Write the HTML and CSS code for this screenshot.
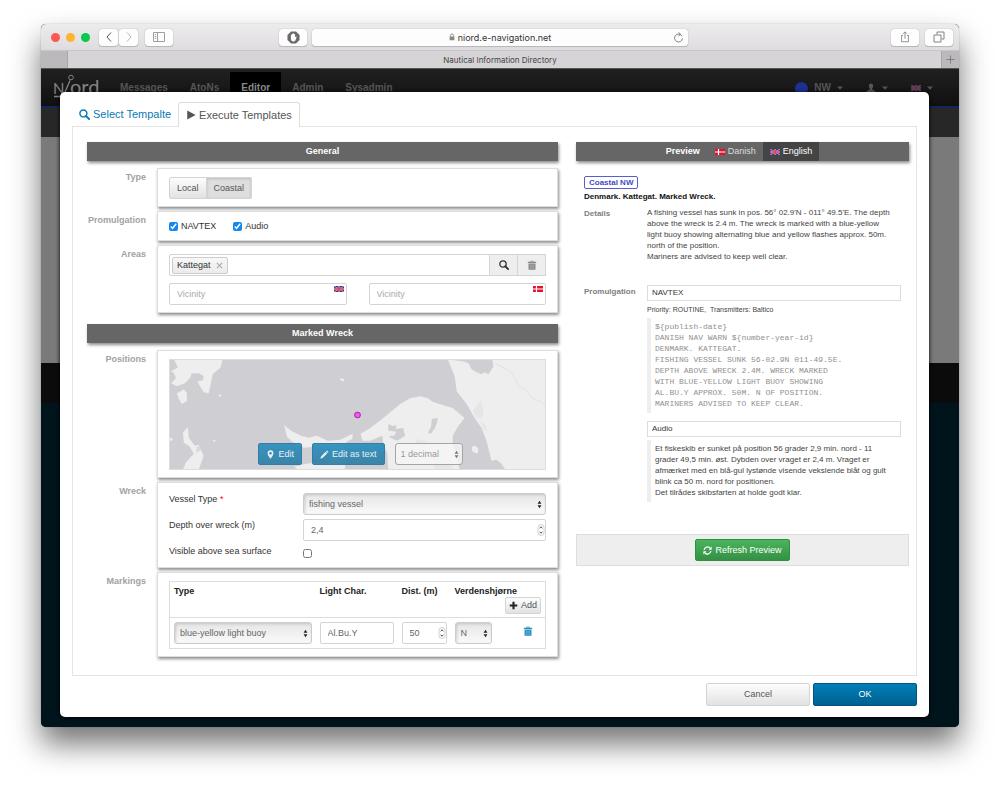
FILE: index.html
```
<!DOCTYPE html>
<html lang="en">
<head>
<meta charset="utf-8">
<title>Nautical Information Directory</title>
<link rel="stylesheet" href="styles.css">
</head>
<body>
<svg class="sprite" aria-hidden="true">
  <symbol id="search" viewBox="0 0 12 12"><circle cx="4.8" cy="4.8" r="3.8" fill="none" stroke="currentColor" stroke-width="1.6"/><path d="M7.5 7.5 11 11" stroke="currentColor" stroke-width="2.2" stroke-linecap="round"/></symbol>
  <symbol id="play" viewBox="0 0 12 12"><path d="M1.500 .5 11.500 6 1.500 11.500z" fill="currentColor"/></symbol>
  <symbol id="trash" viewBox="0 0 12 12"><path d="M1 2.200h3.200V.8h3.600v1.400H11v1.400H1zM1.800 4.200h8.400V11q0 .8-.8.8H2.600q-.8 0-.8-.8z" fill="currentColor"/><path d="M4 5.200v5.600M6 5.200v5.600M8 5.200v5.600" stroke="#fff" stroke-width=".5" opacity=".6"/><path d="M5 1.500h2" stroke="#fff" stroke-width=".6"/></symbol>
  <symbol id="plus" viewBox="0 0 12 12"><path d="M4.600 1h2.800v3.600H11v2.800H7.400V11H4.600V7.400H1V4.600h3.600z" fill="currentColor"/></symbol>
  <symbol id="pin" viewBox="0 0 12 12"><path fill-rule="evenodd" d="M6 .3a3.900 3.900 0 0 1 3.900 3.900C9.900 6.800 6 11.700 6 11.700S2.100 6.800 2.100 4.200A3.900 3.900 0 0 1 6 .3zM6 2.500a1.800 1.800 0 1 0 0 3.600 1.800 1.800 0 0 0 0-3.600z" fill="currentColor"/></symbol>
  <symbol id="pencil" viewBox="0 0 12 12"><path d="M9.300.6 11.400 2.700 10.200 3.900 8.100 1.800zM7.500 2.400 9.600 4.500 3.400 10.700.5 11.500 1.300 8.600z" fill="currentColor"/></symbol>
  <symbol id="refresh" viewBox="0 0 12 12"><path d="M1.500 5.300A4.600 4.600 0 0 1 9.600 3M10.500 6.700A4.600 4.600 0 0 1 2.400 9" fill="none" stroke="currentColor" stroke-width="1.600"/><path d="M11.500.8v4.100H7.400zM.5 11.200V7.100h4.100z" fill="currentColor"/></symbol>
  <symbol id="updown" viewBox="0 0 6 10"><path d="M3 .5 5.300 4H.7zM3 9.500.7 6h4.600z" fill="currentColor"/></symbol>
  <symbol id="spinner" viewBox="0 0 8 12"><rect x="1" y=".5" width="6" height="11" rx="3" fill="#fff" stroke="#bbb" stroke-width=".7"/><path d="M2.700 4.300 4 2.700l1.300 1.600M2.700 7.700 4 9.300l1.300-1.600" fill="none" stroke="#555"/></symbol>
  <symbol id="caret" viewBox="0 0 6 4"><path d="M0 .5h6L3 3.700z" fill="currentColor"/></symbol>
  <symbol id="uk" viewBox="0 0 20 12"><path d="M0 0h20v12H0z" fill="#1f3fa8"/><path d="M0 0 20 12M20 0 0 12" stroke="#c8cfe8" stroke-width="2"/><path d="M0 0 20 12M20 0 0 12" stroke="#d8304c" stroke-width="1"/><path d="M10 0v12M0 6h20" stroke="#f2dfe6" stroke-width="3.400"/><path d="M10 0v12M0 6h20" stroke="#e0142c" stroke-width="2.400"/></symbol>
  <symbol id="dk" viewBox="0 0 20 12"><path d="M0 0h20v12H0z" fill="#e4112d"/><path d="M7 0v12M0 6h20" stroke="#fff" stroke-width="2.400"/></symbol>
</svg>

<div class="window">
  <header class="toolbar">
    <div class="lights"><i class="light red"></i><i class="light amber"></i><i class="light green"></i></div>
    <div class="history">
      <button class="tool" aria-label="Back"><svg viewBox="0 0 10 12"><path d="M7 1.500 3 6l4 4.500" fill="none" stroke="#555"/></svg></button>
      <button class="tool" aria-label="Forward"><svg viewBox="0 0 10 12"><path d="M3 1.500 7 6l-4 4.500" fill="none" stroke="#bbb"/></svg></button>
    </div>
    <button class="tool sidebar-btn" aria-label="Sidebar"><svg viewBox="0 0 12 12"><path d="M.5 1.500h11v9H.5zM4.500 1.500v9M1.800 3.700h1.400M1.800 5.500h1.400M1.800 7.300h1.400" fill="none" stroke="#888" stroke-width=".8"/></svg></button>
    <div class="address-area">
      <button class="tool" aria-label="Content blocker"><svg class="stop" viewBox="0 0 14 14"><path d="M4.300.5h5.400l3.800 3.800v5.400l-3.800 3.800H4.300L.5 9.700V4.300z" fill="#6a6a6a"/><path d="M4.200 7V4.200q.5-.7 1 0V3.300q.6-.8 1.100 0V2.900q.7-.8 1.200 0v.6q.7-.7 1.200 0V7l.8-1q.8-.3.9.4L9 10.200q-.6 1-2 1-2.800 0-2.800-2.600z" fill="#fff"/></svg></button>
      <div class="address">
        <span class="url"><svg class="lock" viewBox="0 0 8 10"><path d="M2 4.500V3a2 2 0 0 1 4 0v1.500" fill="none" stroke="#888" stroke-width="1.200"/><path d="M.8 4.300h6.400v5H.8z" fill="#888"/></svg>niord.e-navigation.net</span>
        <button class="reload" aria-label="Reload"><svg viewBox="0 0 12 12"><path d="M9.800 4.500A4.300 4.300 0 1 0 10.300 7M6 .4 8.300 2.400 6 4.200" fill="none" stroke="#777"/></svg></button>
      </div>
    </div>
    <button class="tool" aria-label="Share"><svg viewBox="0 0 12 14"><path d="M3.800 5H2v7.500h8V5H8.200M6 9V1.200M3.800 3.200 6 1l2.200 2.200" fill="none" stroke="#777" stroke-width=".9"/></svg></button>
    <button class="tool" aria-label="Tabs"><svg viewBox="0 0 12 12"><path d="M4 3.500V1h7v7H8.500M1 4h7v7H1z" fill="none" stroke="#777" stroke-width=".9"/></svg></button>
  </header>
  <div class="tabbar">
    <span class="tab-edge"></span>
    <span class="tab-title">Nautical Information Directory</span>
    <button class="new-tab" aria-label="New tab"><svg viewBox="0 0 10 10"><path d="M5 .5v9M.5 5h9" stroke="#777"/></svg></button>
  </div>

  <div class="stage">
    <div class="site">
      <nav class="site-nav">
        <svg class="logo" viewBox="0 0 48 30" role="img" aria-label="Niord"><text x="0" y="22" class="logo-small">N</text><text x="17" y="22" class="logo-big">ord</text><path d="M10.500 23.500 17 8.500M1 24.500h16" fill="none" stroke="#858585" stroke-width="1.300"/><circle cx="18" cy="5.500" r="2.300" fill="none" stroke="#858585"/></svg>
        <a href="#">Messages</a><a href="#">AtoNs</a><a href="#" class="current">Editor</a><a href="#">Admin</a><a href="#">Sysadmin</a>
        <div class="nav-right">
          <a href="#"><i class="dot"></i>NW<svg class="caret"><use href="#caret"/></svg></a>
          <a href="#" aria-label="User"><svg class="user" viewBox="0 0 12 12"><path d="M6 .5c2 0 2.700 1.400 2.600 3.200C8.500 5 8 6 7.400 6.600v1.200L11 9.500q.8.400.8 2.500H.2q0-2.100.8-2.500l3.600-1.700V6.600C4 6 3.500 5 3.400 3.700 3.300 1.900 4 .5 6 .5z" fill="currentColor"/></svg><svg class="caret"><use href="#caret"/></svg></a>
          <a href="#" aria-label="Language"><svg class="flag dim"><use href="#uk"/></svg><svg class="caret"><use href="#caret"/></svg></a>
        </div>
      </nav>
      <div class="site-sub"></div>
      <div class="site-main"></div>
      <div class="site-foot"></div>
      <div class="site-end"></div>
    </div>

    <section class="modal" role="dialog" aria-label="Execute Templates">
      <div class="tabs">
        <a href="#" class="tab"><svg class="icon"><use href="#search"/></svg>Select Tempalte</a>
        <a href="#" class="tab active"><svg class="icon"><use href="#play"/></svg>Execute Templates</a>
      </div>
      <div class="panel">
        <form class="editor">
          <h2 class="bar">General</h2>
          <div class="group">
            <span class="group-label">Type</span>
            <div class="box"><div class="btn-group"><button type="button" class="btn">Local</button><button type="button" class="btn pressed">Coastal</button></div></div>
          </div>
          <div class="group">
            <span class="group-label">Promulgation</span>
            <div class="box checks">
              <label class="check"><input type="checkbox" checked>NAVTEX</label>
              <label class="check"><input type="checkbox" checked>Audio</label>
            </div>
          </div>
          <div class="group">
            <label class="group-label" for="area">Areas</label>
            <div class="box areas">
              <div class="area-row">
                <div class="tag-field"><span class="tag">Kattegat<button type="button" class="tag-x" aria-label="Remove Kattegat"><svg viewBox="0 0 8 8"><path d="M1 1l6 6M7 1 1 7" stroke="#aaa" stroke-width="1.300"/></svg></button></span><input id="area" type="text"></div>
                <button type="button" class="addon dark" aria-label="Search area"><svg class="icon"><use href="#search"/></svg></button>
                <button type="button" class="addon" aria-label="Clear areas"><svg class="icon"><use href="#trash"/></svg></button>
              </div>
              <div class="vicinities">
                <div class="field-wrap"><input class="field" type="text" placeholder="Vicinity" aria-label="Vicinity, English"><svg class="flag corner"><use href="#uk"/></svg></div>
                <div class="field-wrap"><input class="field" type="text" placeholder="Vicinity" aria-label="Vicinity, Danish"><svg class="flag corner"><use href="#dk"/></svg></div>
              </div>
            </div>
          </div>

          <h2 class="bar second">Marked Wreck</h2>
          <div class="group">
            <span class="group-label">Positions</span>
            <div class="box">
              <div class="map">
                <svg class="chart" viewBox="0 0 378 111" preserveAspectRatio="xMidYMid slice" role="img" aria-label="Map of Kattegat">
                  <path fill="#cfced3" d="M0 0h378v111H0z"/>
                  <g fill="#eee">
                    <path d="M4 0h49l-2 8-8 7-2 10-2 9-5-1-5-8-1-3 5-1 1-4-5-3-7 0-2 5-5 5-8 3-6-3 5-5-2-5-3-2 7-4z"/>
                    <path d="M7 34l7-4 3 4 0 8-5 3-3-5z"/>
                    <path d="M18 68l1 11 6 8 4-1 5 11-5 14H13l3-7 8-9-4-7-6-4-1-10z"/>
                    <path d="M0 79l3 1-1 2H0zM43 81l4 1-3 1zM49 35l3 1-2 2zM171 19l5 1-1 2-3-1z"/>
                    <path d="M115 66l7 6 10 5 8 2 8-2 11 5 13-1 12-6 0 5-6 3-5 9 5 6-2 13h-47l-4-3 14-3 20-2 4-10-6-6-22 2-12-6-5-5z"/>
                    <path d="M88 89l6 3 4 5-7-3zM127 108l6 3h-5z"/>
                    <path d="M192 75l10-6 13-10 17-14 10-6 10-2 8 2 5 4 10 3 10 3 12 10-7 9-5 9v10l4 8 3 16h-72l-1-16-4-10-1-8-12 5-8 0z"/>
                    <path d="M280 0l7 17 2 15 10 13 8 14 7 10 5 13 5 20 5-1 5 4 4 6h40V0h-53l1 7-5 8-4-2-3 2-5-2-5-3-3-6-5-2z"/>
                    <path d="M304 88l4-1 3 3-1 5-5-2z"/>
                  </g>
                  <g fill="#cfced3">
                    <path d="M220 65l5 2 3-1 0 4 7-1 2 8-8 5-7-3-1-2 5 0 2-4-8-1z"/>
                    <path d="M264 60l6-1-1 5-2 5-4 6-3-1 3-6z"/>
                    <path d="M27 88l4-1 0 5-5 2z" opacity=".6"/>
                  </g>
                  <g fill="#e3e3e3"><path d="M311 45l2-4 3 10-1 8-6 0-4-7zM313 62l6 5 1 5-5-2zM247 80l12 3-2 5-9-2zM266 105l18 0 2 6h-20z" opacity=".7"/></g>
                  <path d="M328 4l8 4 9 6 6 12 9 6 6 8 7 2 5 4" fill="none" stroke="#dedede" stroke-width=".8"/>
                  <circle cx="189" cy="56" r="2.900" fill="#f457ec" stroke="#b01ca8"/>
                </svg>
                <div class="map-tools">
                  <button type="button" class="btn blue"><svg class="icon"><use href="#pin"/></svg>Edit</button>
                  <button type="button" class="btn blue"><svg class="icon"><use href="#pencil"/></svg>Edit as text</button>
                  <span class="select glass"><select aria-label="Position format"><option>1 decimal</option></select><svg class="arrows"><use href="#updown"/></svg></span>
                </div>
              </div>
            </div>
          </div>
          <div class="group">
            <span class="group-label">Wreck</span>
            <div class="box wreck">
              <label for="vessel">Vessel Type <span class="req">*</span></label>
              <span class="select"><select id="vessel"><option>fishing vessel</option></select><svg class="arrows"><use href="#updown"/></svg></span>
              <label for="depth">Depth over wreck (m)</label>
              <div class="field-wrap"><input class="field" id="depth" type="text" inputmode="decimal" value="2,4"><svg class="spin"><use href="#spinner"/></svg></div>
              <label for="visible">Visible above sea surface</label>
              <input id="visible" type="checkbox">
            </div>
          </div>
          <div class="group">
            <span class="group-label">Markings</span>
            <div class="box">
              <table class="markings">
                <colgroup><col class="c-type"><col class="c-light"><col class="c-dist"><col class="c-dir"><col></colgroup>
                <thead><tr><th>Type</th><th>Light Char.</th><th>Dist. (m)</th><th>Verdenshjørne</th><th class="add-cell"><button type="button" class="btn small"><svg class="icon"><use href="#plus"/></svg>Add</button></th></tr></thead>
                <tbody><tr>
                  <td><span class="select"><select aria-label="Type"><option>blue-yellow light buoy</option></select><svg class="arrows"><use href="#updown"/></svg></span></td>
                  <td><input class="field tight" type="text" value="Al.Bu.Y" aria-label="Light character"></td>
                  <td><div class="field-wrap"><input class="field tight" type="text" inputmode="numeric" value="50" aria-label="Distance"><svg class="spin"><use href="#spinner"/></svg></div></td>
                  <td><span class="select"><select aria-label="Direction"><option>N</option></select><svg class="arrows"><use href="#updown"/></svg></span></td>
                  <td class="del-cell"><button type="button" class="delete" aria-label="Delete marking"><svg class="icon"><use href="#trash"/></svg></button></td>
                </tr></tbody>
              </table>
            </div>
          </div>
        </form>

        <div class="preview">
          <div class="bar preview-bar">
            <h2>Preview</h2>
            <a href="#" class="lang"><svg class="flag"><use href="#dk"/></svg>Danish</a>
            <a href="#" class="lang on"><svg class="flag"><use href="#uk"/></svg>English</a>
          </div>
          <article class="message">
            <span class="badge">Coastal NW</span>
            <h3>Denmark. Kattegat. Marked Wreck.</h3>
            <dl>
              <dt>Details</dt>
              <dd>A fishing vessel has sunk in pos. 56° 02.9'N - 011° 49.5'E. The depth<br>above the wreck is 2.4 m. The wreck is marked with a blue-yellow<br>light buoy showing alternating blue and yellow flashes approx. 50m.<br>north of the position.<br>Mariners are advised to keep well clear.</dd>
              <dt class="promo">Promulgation</dt>
              <dd>
                <div class="channel">NAVTEX</div>
                <p class="meta">Priority: ROUTINE,&nbsp; Transmitters: Baltico</p>
                <pre class="quote">${publish-date}
DANISH NAV WARN ${number-year-id}
DENMARK. KATTEGAT.
FISHING VESSEL SUNK 56-02.9N 011-49.5E.
DEPTH ABOVE WRECK 2.4M. WRECK MARKED
WITH BLUE-YELLOW LIGHT BUOY SHOWING
AL.BU.Y APPROX. 50M. N OF POSITION.
MARINERS ADVISED TO KEEP CLEAR.</pre>
                <div class="channel">Audio</div>
                <div class="quote spoken">Et fiskeskib er sunket på position 56 grader 2,9 min. nord - 11<br>grader 49,5 min. øst. Dybden over vraget er 2,4 m. Vraget er<br>afmærket med en blå-gul lystønde visende vekslende blåt og gult<br>blink ca 50 m. nord for positionen.<br>Det tilrådes skibsfarten at holde godt klar.</div>
              </dd>
            </dl>
          </article>
          <div class="refresh-box"><button type="button" class="btn green"><svg class="icon"><use href="#refresh"/></svg>Refresh Preview</button></div>
        </div>
      </div>
      <footer class="actions"><button type="button" class="btn">Cancel</button><button type="button" class="btn primary">OK</button></footer>
    </section>
  </div>
</div>
</body>
</html>
```
FILE: styles.css
```
* { box-sizing: border-box; }
body { margin: 0; padding: 24px 41px 50px; background: #fff; color: #333; font: 9px/13px "Liberation Sans", Arial, sans-serif; }
a { color: inherit; text-decoration: none; }
button, input, select { font: inherit; color: inherit; margin: 0; }
button { cursor: pointer; }
h2, h3, p, dl, dd, pre { margin: 0; }
.sprite { position: absolute; width: 0; height: 0; }
.icon { width: 9px; height: 9px; flex: none; }
.flag { width: 10px; height: 6px; flex: none; }

/* browser window */
.window { border-radius: 5px; box-shadow: 0 0 1px rgba(0,0,0,.5), 0 17px 30px rgba(0,0,0,.55); background: #00141c; }
.toolbar { height: 27px; display: flex; align-items: center; padding: 0 6px 0 10px; background: linear-gradient(#edebed, #dedcde); border-radius: 5px 5px 0 0; border-bottom: 1px solid #c8c6c8; }
.lights { display: flex; gap: 6px; }
.light { width: 9px; height: 9px; border-radius: 50%; }
.red { background: #fc5753; }
.amber { background: #fdb431; }
.light.green { background: #06c94b; }
.tool { width: 28px; height: 17px; padding: 0; display: grid; place-items: center; border: 0; border-radius: 3px; background: #fdfdfd; box-shadow: 0 0 1px rgba(0,0,0,.4), 0 1px 1px rgba(0,0,0,.15); }
.tool svg { width: 12px; height: 12px; }
.tool .stop { width: 13px; height: 13px; }
.tool + .tool { margin-left: 6px; }
.history { display: flex; margin-left: 9px; gap: 1px; }
.history .tool { width: 19px; margin: 0; }
.sidebar-btn { margin-left: 7px; }
.address-area { flex: 1; display: flex; justify-content: center; gap: 5px; margin: 0 203px 0 106px; }
.address { flex: 1; display: flex; align-items: center; justify-content: center; position: relative; background: #fdfdfd; border-radius: 3px; box-shadow: 0 0 1px rgba(0,0,0,.4), 0 1px 1px rgba(0,0,0,.15); font-family: Inter, sans-serif; color: #333; }
.url { display: flex; align-items: center; gap: 3px; }
.lock { width: 6px; height: 8px; }
.reload { position: absolute; right: 4px; top: 3px; width: 11px; height: 11px; padding: 0; border: 0; background: none; display: grid; }
.tabbar { height: 18px; display: flex; align-items: stretch; background: #d6d4d6; border-bottom: 1px solid #555; font: 8px/18px Inter, sans-serif; color: #444; }
.tab-edge { width: 27px; background: #bbb9bb; border-right: 1px solid #a8a6a8; }
.tab-title { flex: 1; text-align: center; padding-right: 9px; }
.new-tab { width: 18px; padding: 0; border: 0; border-left: 1px solid #a8a6a8; background: #bbb9bb; display: grid; place-items: center; }
.new-tab svg { width: 9px; height: 9px; }

/* site behind the dialog */
.stage { display: grid; border-radius: 0 0 5px 5px; overflow: hidden; }
.site, .modal { grid-area: 1 / 1; }
.site { display: flex; flex-direction: column; }
.site-nav { height: 39px; display: flex; align-items: flex-start; padding: 3px 16px 0 12px; background: linear-gradient(#202020, #101010); border-bottom: 2px solid #14245f; color: #555; font-size: 10px; font-weight: bold; line-height: 32px; }
.logo { width: 48px; height: 30px; margin-right: 8px; }
.logo text { fill: #858585; font-family: Lato, sans-serif; font-weight: normal; }
.logo .logo-small { font-size: 15px; }
.logo .logo-big { font-size: 20px; }
.site-nav > a { padding: 0 11px; }
.site-nav > .current { background: #000; color: #8a8a8a; }
.nav-right { margin-left: auto; padding-right: 10px; display: flex; gap: 23px; }
.nav-right a { display: flex; align-items: center; gap: 6px; }
.dot { width: 13px; height: 13px; border-radius: 50%; background: #1c3190; }
.caret { width: 6px; height: 4px; }
.user { width: 10px; height: 10px; }
.dim { opacity: .45; }
.site-sub { height: 29px; background: #272727; }
.site-main { height: 226px; background: #7a7a7a; }
.site-foot { height: 40px; background: #0b0b0b; }
.site-end { flex: 1; background: #00141c; }

/* dialog */
.modal { margin: 23px 30px 10px 19px; padding: 10px 12px 11px; background: #fff; border-radius: 5px; box-shadow: 0 1px 4px #000; }
.tabs { display: flex; font-size: 11px; line-height: 23px; }
.tab { display: flex; align-items: center; gap: 3px; padding: 0 7px; height: 24px; color: #0a7ab5; }
.tab .icon { width: 11px; height: 11px; }
.tab.active { padding: 0 7px; margin-bottom: -1px; height: 25px; color: #555; border: 1px solid #ddd; border-bottom: 0; border-radius: 3px 3px 0 0; background: #fff; position: relative; }
.active .icon { width: 10px; height: 10px; }
.panel { display: grid; grid-template-columns: minmax(0, 471fr) minmax(0, 333fr); gap: 18px; padding: 15px 7px 18px 14px; border: 1px solid #e4e4e4; }
.bar { height: 19px; line-height: 19px; margin: 0; text-align: center; background: #666; color: #fff; font-size: 9px; box-shadow: 1px 2px 3px rgba(0,0,0,.45); }
.second { margin-top: 11px; margin-bottom: 7px; }
.bar + .group { margin-top: 7px; }
.group { display: grid; grid-template-columns: 59px minmax(0, 1fr); gap: 11px; margin-top: 4px; }
.group-label { padding-top: 3px; text-align: right; font-weight: bold; color: #a2a2a2; }
.box { padding: 8px 11px 7px; background: #fff; border: 1px solid #ddd; box-shadow: 1px 2px 3px rgba(0,0,0,.45); }

.btn { height: 22px; padding: 0 7px; display: inline-flex; align-items: center; justify-content: center; gap: 3px; border: 1px solid #d4d4d4; border-radius: 2px; background: linear-gradient(#fdfdfd, #e2e2e2); color: #555; white-space: nowrap; }
.btn-group { display: flex; }
.btn-group .btn:first-child { border-radius: 2px 0 0 2px; }
.btn-group .btn + .btn { border-left: 0; border-radius: 0 2px 2px 0; }
.btn.pressed { background: #dedede; box-shadow: inset 0 1px 3px rgba(0,0,0,.15); }
.btn.small { height: 17px; padding: 0 3px; }
.small .icon { color: #222; }
.btn.blue { background: linear-gradient(#2b8fbe, #317fa5); border-color: #2478a0; color: #e8f3f8; opacity: .93; }
.btn.green { background: linear-gradient(#4bb45c, #349045); border-color: #2e9140; color: #fff; }
.btn.primary { background: linear-gradient(#0080b8, #00608f); border-color: #005580; color: #fff; }

.checks { display: flex; gap: 17px; }
.check { display: flex; align-items: center; gap: 3px; line-height: 13px; }
input[type=checkbox] { width: 9px; height: 9px; margin: 0; accent-color: #1189f0; }

.field { width: 100%; height: 22px; padding: 0 7px; display: block; border: 1px solid #d4d4d4; border-radius: 2px; background: #fff; color: #666; outline: 0; }
.field::placeholder { color: #aaa; opacity: 1; }
.field-wrap { position: relative; }
.corner { position: absolute; right: 3px; top: 3px; }
.spin { position: absolute; right: 1px; top: 5px; width: 8px; height: 12px; }
.area-row { display: flex; margin-bottom: 7px; }
.tag-field { flex: 1; display: flex; align-items: center; height: 22px; padding: 0 2px; border: 1px solid #d4d4d4; border-radius: 2px 0 0 2px; }
.tag-field input { flex: 1; min-width: 0; border: 0; outline: 0; background: none; }
.tag { display: flex; align-items: center; gap: 5px; height: 17px; padding: 0 4px; border: 1px solid #ccc; border-radius: 2px; background: linear-gradient(#f8f8f8, #ebebeb); }
.tag-x { width: 7px; height: 7px; padding: 0; border: 0; background: none; display: grid; }
.addon { width: 28px; height: 22px; padding: 0; display: grid; place-items: center; border: 1px solid #d4d4d4; border-left: 0; background: #eee; color: #888; }
.addon .icon, .delete .icon { width: 10px; height: 10px; }
.addon.dark { color: #333; }
.vicinities { display: grid; grid-template-columns: 1fr 1fr; gap: 22px; }

.select { position: relative; display: block; }
.select select { width: 100%; height: 22px; padding: 0 5px; display: block; appearance: none; border: 1px solid #ccc; border-radius: 3px; color: #666; background: linear-gradient(#e6e6e6, #fafafa); box-shadow: inset 1px 1px 3px rgba(0,0,0,.15); outline: 0; }
.arrows { position: absolute; right: 4px; top: 7px; width: 5px; height: 9px; color: #222; pointer-events: none; }
.glass select { width: 68px; background: rgba(245,245,245,.8); border-color: #a5a5a5; color: #999; box-shadow: none; }
.glass .arrows { color: #777; }

.map { position: relative; height: 111px; border: 1px solid #ddd; }
.chart { width: 100%; height: 100%; display: block; }
.map-tools { position: absolute; left: 6px; right: 0; bottom: 4px; display: flex; justify-content: center; gap: 10px; }
.wreck { display: grid; grid-template-columns: 134px minmax(0, 1fr); row-gap: 4px; padding-top: 10px; padding-bottom: 5px; }
.wreck label { line-height: 13px; }
.wreck > input { margin: 4px 0; }
.req { color: red; }

.markings { width: 100%; table-layout: fixed; border-collapse: collapse; border: 1px solid #ddd; }
.c-type { width: 146px; }
.c-light { width: 82px; }
.c-dist { width: 53px; }
.c-dir { width: 45px; }
.markings th { height: 36px; padding: 3px 4px; text-align: left; vertical-align: top; white-space: nowrap; color: #222; }
.markings .add-cell { vertical-align: bottom; text-align: right; font-weight: normal; }
.add-cell .btn { vertical-align: bottom; }
.markings td { padding: 4px; border-top: 1px solid #ddd; }
.del-cell { text-align: center; }
.delete { padding: 0 0 0 16px; border: 0; background: none; color: #2a8fc4; }

/* preview */
.preview-bar { display: flex; justify-content: center; }
.preview-bar h2 { font-size: 9px; line-height: 19px; margin-right: 8px; }
.lang { display: flex; align-items: center; gap: 3px; padding: 0 7px; color: #ddd; }
.lang.on { background: #444; color: #fff; }
.message { padding: 15px 8px 0; font-size: 8px; line-height: 11px; }
.badge { display: inline-block; padding: 0 4px; border: 1px solid #5560c8; border-radius: 2px; color: #3f4cc4; font-weight: bold; }
.message h3 { margin: 2px 0 5px; font-size: 8px; line-height: 11px; color: #111; }
.message dl { display: grid; grid-template-columns: 63px minmax(0, 1fr); row-gap: 23px; }
.message dt { padding-top: 1px; font-weight: bold; color: #808080; }
.message dd { white-space: nowrap; color: #444; }
.channel { height: 16px; padding: 0 4px; line-height: 14px; border: 1px solid #ddd; color: #333; }
.meta { padding-top: 3px; font-size: 7px; line-height: 11px; }
.quote { margin: 3px 0 8px; padding: 3px 0 4px 4px; border-left: 4px solid #eee; }
pre.quote { color: #909090; font: 8px/11px "Liberation Mono", monospace; }
.refresh-box { display: flex; justify-content: center; margin-top: 24px; padding: 4px 0; background: #eee; border: 1px solid #ddd; }
.actions { display: flex; justify-content: flex-end; gap: 3px; padding-top: 7px; }
.actions .btn { width: 104px; height: 23px; }
```
